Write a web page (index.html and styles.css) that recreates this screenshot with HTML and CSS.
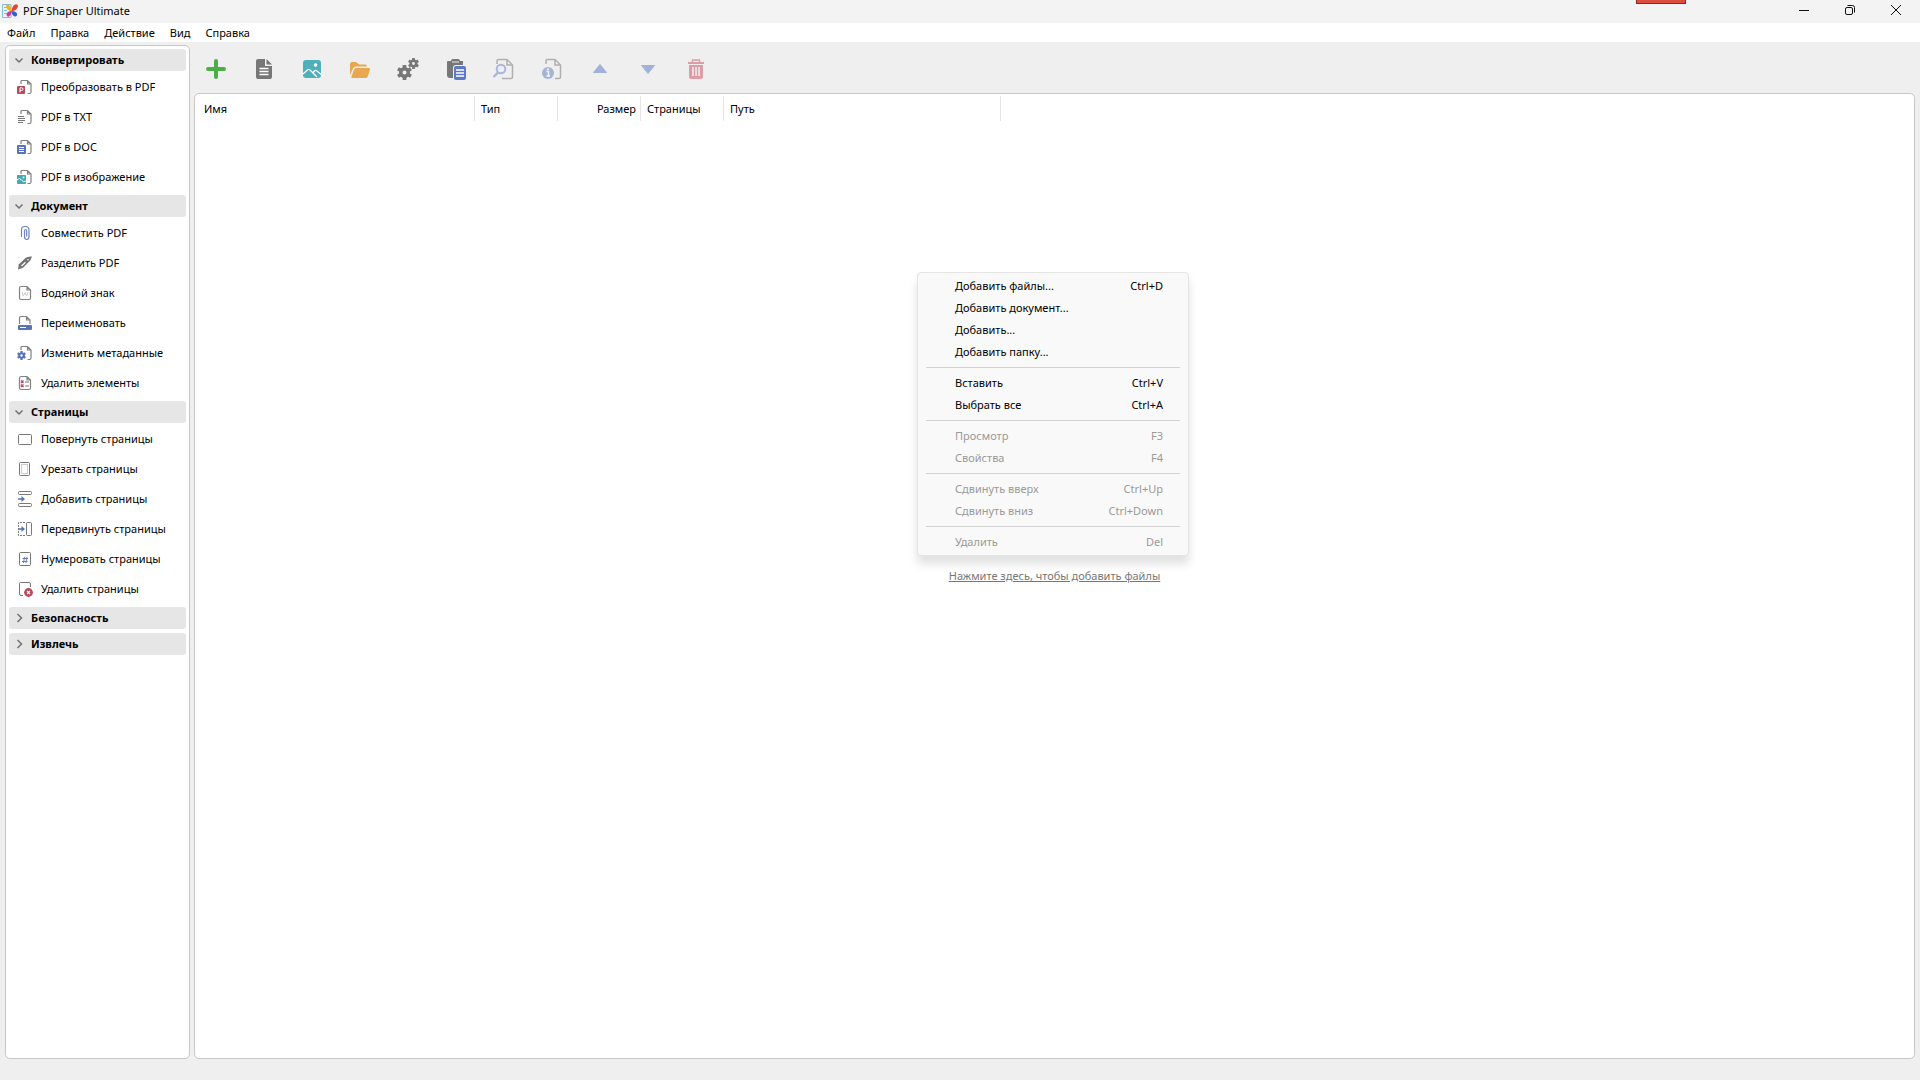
FILE: index.html
```html
<!DOCTYPE html>
<html lang="ru">
<head>
    <title>PDF Shaper Ultimate</title>
    <meta charset="UTF-8">
    <meta name="viewport" content="width=device-width, initial-scale=1.0">
    <link rel="stylesheet" href="styles.css">
</head>
<body>
    <!-- shared icon shapes -->
    <svg class="defs" aria-hidden="true">
        <symbol id="page-part" viewBox="0 0 16 16">
            <path d="M4 5V2.5Q4 1.5 5 1.5H10.5L14 5V13Q14 14.5 12.5 14.5H10.5M10.5 1.5V5H14" fill="none" stroke="#808080" stroke-width="1.2"/>
        </symbol>
        <symbol id="page" viewBox="0 0 16 16">
            <path d="M3.5 1.5H10L13.5 5V13Q13.5 14.5 12 14.5H4Q2.5 14.5 2.5 13V3Q2.5 1.5 4 1.5M10 1.5V5H13.5" fill="none" stroke="#808080" stroke-width="1.2"/>
        </symbol>
        <symbol id="chevron-down" viewBox="0 0 10 10"><path d="M1.5 3.5L5 7L8.5 3.5" fill="none" stroke="#707070" stroke-width="1.5"/></symbol>
        <symbol id="chevron-right" viewBox="0 0 10 10"><path d="M3.5 1L7.5 5L3.5 9" fill="none" stroke="#707070" stroke-width="1.5"/></symbol>
        <symbol id="gear" viewBox="0 0 12 12">
            <circle cx="6" cy="6" r="3" fill="none" stroke="currentColor" stroke-width="2.8"/>
            <path d="M6 0V3M6 9V12M.8 3L3.4 4.5M8.6 7.5L11.2 9M.8 9L3.4 7.5M8.6 4.5L11.2 3" stroke="currentColor" stroke-width="3"/>
        </symbol>
    </svg>

    <header class="title-bar">
        <svg class="app-icon" width="16" height="16" viewBox="0 0 16 16">
            <path d="M.5 1.5H9V14.5H.5Z" fill="#eaf5fb" stroke="#7fbfe0"/>
            <path d="M2 4.5H5M2 7.5H5M2 10.5H5" stroke="#7fbfe0"/>
            <path d="M9.500 8.500Q3.500 6.500 4 2.500Q6 .5 8 3Q9.500 5 9.500 8.500" fill="#f2b21c"/>
            <path d="M9.500 8.500Q10 3 13 1.500Q16.500 .8 15.800 4Q14.500 7.500 9.500 8.500" fill="#e8403a"/>
            <path d="M9.500 8Q5.500 8 4.500 11Q4.500 14.500 7 13.500Q9.500 12 9.500 8" fill="#c23fa4"/>
            <path d="M9.500 8Q14 8 15 10.500Q15.500 14 12.500 13.500Q9.500 12 9.500 8" fill="#2f62d0"/>
        </svg>
        <h1>PDF Shaper Ultimate</h1>
        <div class="record-tab"></div>
        <div class="window-buttons">
            <button aria-label="Свернуть"><svg width="12" height="12" viewBox="0 0 12 12"><path d="M1 6.5H11"/></svg></button>
            <button aria-label="Восстановить"><svg width="12" height="12" viewBox="0 0 12 12"><rect x="1.5" y="3.5" width="7" height="7" rx="1.5"/><path d="M3.5 1.5H8.5Q10.5 1.5 10.5 3.5V8.5"/></svg></button>
            <button aria-label="Закрыть"><svg width="12" height="12" viewBox="0 0 12 12"><path d="M1 1L11 11M11 1L1 11"/></svg></button>
        </div>
    </header>

    <nav class="menu-bar">
        <button>Файл</button>
        <button>Правка</button>
        <button>Действие</button>
        <button>Вид</button>
        <button>Справка</button>
    </nav>

    <div class="workspace">
        <aside class="sidebar">
            <button class="group-header"><svg width="10" height="10"><use href="#chevron-down"/></svg>Конвертировать</button>
            <div class="group-items">
                <button><svg width="16" height="16" viewBox="0 0 16 16"><use href="#page-part"/><rect y="7" width="8" height="8" rx="1" fill="#b9485c"/><path d="M3 13.5V8.8H4.5Q6 8.8 6 10.2Q6 11.5 4.5 11.5H3" fill="none" stroke="#fff"/></svg>Преобразовать в PDF</button>
                <button><svg width="16" height="16" viewBox="0 0 16 16"><use href="#page-part"/><path d="M1 7.5H7M1 9.5H8M1 11.5H8M1 13.5H6" stroke="#777"/></svg>PDF в TXT</button>
                <button><svg width="16" height="16" viewBox="0 0 16 16"><use href="#page-part"/><rect y="6" width="9" height="9" rx="1" fill="#5873b9"/><path d="M2 8.5H7M2 10.5H7M2 12.5H7" stroke="#fff"/></svg>PDF в DOC</button>
                <button><svg width="16" height="16" viewBox="0 0 16 16"><use href="#page-part"/><rect y="6" width="9" height="9" rx="1" fill="#45a9b3"/><path d="M0 11Q2.5 8 4.5 11T9 12" fill="none" stroke="#fff"/><circle cx="6.5" cy="8.5" r="1" fill="#fff"/></svg>PDF в изображение</button>
            </div>

            <button class="group-header"><svg width="10" height="10"><use href="#chevron-down"/></svg>Документ</button>
            <div class="group-items">
                <button><svg width="16" height="16" viewBox="0 0 16 16"><path d="M4.5 12V4.5Q4.5 1.5 8 1.5Q12 1.5 12 5V11.5Q12 14.5 9.7 14.5Q7.5 14.5 7.5 11.5V6Q7.5 4.5 8.6 4.5Q9.7 4.5 9.7 6V11.5" fill="none" stroke="#6b84c4" stroke-width="1.2"/></svg>Совместить PDF</button>
                <button><svg width="16" height="16" viewBox="0 0 16 16"><path d="M1 14.5L1.7 9.5L8.5 3Q10.5 1.2 15 1.5L13.300 5.5L6 12.7Z" fill="#747474"/><path d="M4.500 11L8.500 7.2" stroke="#fff" stroke-width="1.2"/><circle cx="11" cy="4.7" r=".8" fill="#fff"/></svg>Разделить PDF</button>
                <button><svg width="16" height="16" viewBox="0 0 16 16"><use href="#page"/><path d="M5 7L6.3 11L8 7.5L9.7 11L11 7" fill="none" stroke="#ccc"/></svg>Водяной знак</button>
                <button><svg width="16" height="16" viewBox="0 0 16 16"><path d="M2.5 9V3Q2.5 1.5 4 1.5H9.5L13 5V9M9.5 1.5V5H13" fill="none" stroke="#808080" stroke-width="1.2"/><rect x="1" y="10" width="14" height="5" rx="1" fill="#5873b9"/><rect x="3" y="12" width="6" height="1" fill="#fff"/></svg>Переименовать</button>
                <button class="blue-gear"><svg width="16" height="16" viewBox="0 0 16 16"><use href="#page-part"/><use href="#gear" x="0" y="6" width="9" height="9"/></svg>Изменить метаданные</button>
                <button><svg width="16" height="16" viewBox="0 0 16 16"><use href="#page"/><path d="M4 5.500L6.500 8M6.500 5.500L4 8M4 9.500L6.500 12M6.500 9.500L4 12" stroke="#b9485c" stroke-width="1.300"/><path d="M8 7H12M8 11H12" stroke="#777"/></svg>Удалить элементы</button>
            </div>

            <button class="group-header"><svg width="10" height="10"><use href="#chevron-down"/></svg>Страницы</button>
            <div class="group-items">
                <button><svg width="16" height="16" viewBox="0 0 16 16"><rect x="1.5" y="3.5" width="13" height="10" rx="1" fill="none" stroke="#777"/></svg>Повернуть страницы</button>
                <button><svg width="16" height="16" viewBox="0 0 16 16"><rect x="2.5" y="1.5" width="10" height="13" rx="1" fill="none" stroke="#777"/><rect x="4.5" y="3.5" width="6" height="9" fill="none" stroke="#ccc"/></svg>Урезать страницы</button>
                <button><svg width="16" height="16" viewBox="0 0 16 16"><rect x="1.5" y=".5" width="13" height="3" rx="1" fill="none" stroke="#777"/><rect x="1.5" y="12.5" width="13" height="3" rx="1" fill="none" stroke="#777"/><path d="M1 8H6" stroke="#4f76bd" stroke-width="1.5"/><path d="M4.5 5L8 8L4.5 11Z" fill="#4f76bd"/></svg>Добавить страницы</button>
                <button><svg width="16" height="16" viewBox="0 0 16 16"><rect x="9.5" y="1.5" width="5" height="13" rx="1" fill="none" stroke="#777"/><path d="M8 1.5H1.5V14.5H8" fill="none" stroke="#777" stroke-dasharray="2 1"/><path d="M2 8H6" stroke="#4f76bd" stroke-width="1.5"/><path d="M4.5 5L8 8L4.5 11Z" fill="#4f76bd"/></svg>Передвинуть страницы</button>
                <button><svg width="16" height="16" viewBox="0 0 16 16"><rect x="2.5" y="1.5" width="11" height="13" rx="1" fill="none" stroke="#777"/><path d="M7.5 6L6.5 12M10 6L9 12M5.5 7.5H11M5 10.5H10.5" stroke="#5873b9" stroke-width=".9"/></svg>Нумеровать страницы</button>
                <button><svg width="16" height="16" viewBox="0 0 16 16"><path d="M6 14.5H4Q2.5 14.5 2.5 13V2.5Q2.5 1.5 3.5 1.5H12Q13.5 1.5 13.5 3V6" fill="none" stroke="#777"/><circle cx="11.5" cy="11.5" r="4.4" fill="#b9485c"/><path d="M10 10L13 13M13 10L10 13" stroke="#fff" stroke-width="1.2"/></svg>Удалить страницы</button>
            </div>

            <button class="group-header collapsed"><svg width="10" height="10"><use href="#chevron-right"/></svg>Безопасность</button>
            <button class="group-header collapsed"><svg width="10" height="10"><use href="#chevron-right"/></svg>Извлечь</button>
        </aside>

        <main class="content">
            <div class="toolbar">
                <button aria-label="Добавить файлы"><svg width="24" height="24" viewBox="0 0 24 24"><path d="M12 4V20M4 12H20" stroke="#4cae46" stroke-width="4" stroke-linecap="round"/></svg></button>
                <button aria-label="Добавить документ"><svg width="24" height="24" viewBox="0 0 24 24"><path d="M6 2H13V9H20V20Q20 22 18 22H6Q4 22 4 20V4Q4 2 6 2M14.5 2L20 7.5H14.5Z" fill="#777"/><path d="M7.5 11.5H16.5M7.5 14.5H16.5M7.5 17.5H16.5" stroke="#fff" stroke-width="1.5"/></svg></button>
                <button aria-label="Добавить изображение"><svg width="24" height="24" viewBox="0 0 24 24"><rect x="3" y="3" width="18" height="18" rx="3" fill="#4db0bb"/><path d="M3 17L8 12.5Q9 12 10 13L17 20M13 15.5L15 13.5Q16 13 17 14L21 17.5" fill="none" stroke="#fff" stroke-width="1.3"/><circle cx="15.5" cy="8" r="1.8" fill="#fff"/></svg></button>
                <button aria-label="Добавить папку"><svg width="24" height="24" viewBox="0 0 24 24"><path d="M2 18V7Q2 5 4 5H8L11 7.5H17Q19 7.5 19 9.5H8Q6 9.5 5 11.5Z" fill="#e9a750"/><path d="M8 11H21Q22.5 11 22 12.5L19.5 20Q19 21 18 21H4Q3 21 3.5 19.5L6 12.5Q6.5 11 8 11" fill="#e9a750"/></svg></button>
                <button aria-label="Настройки" class="gears"><svg width="24" height="24" viewBox="0 0 24 24"><use href="#gear" x="1" y="8" width="15" height="15"/><use href="#gear" x="12" y="1" width="11" height="11"/></svg></button>
                <button aria-label="Вставить"><svg width="24" height="24" viewBox="0 0 24 24"><path d="M4 4H7Q7 2 9 2H14Q16 2 16 4H19V8H12Q9 8 9 11V21H6Q3 21 3 18V5Q3 4 4 4" fill="#777"/><path d="M8 5H15" stroke="#eee"/><rect x="10" y="9" width="12" height="14" rx="2" fill="#5f79c4"/><path d="M12 13H20M12 16H20M12 19H20" stroke="#fff" stroke-width="1.3"/></svg></button>
                <button aria-label="Просмотр" disabled><svg width="24" height="24" viewBox="0 0 24 24"><path d="M5 7V4Q5 2.5 6.5 2.5H15L20.5 8V20Q20.5 21.5 19 21.5H10M15 2.5V8H20.5" fill="none" stroke="#666" stroke-width="1.5"/><circle cx="9" cy="12" r="4.3" fill="none" stroke="#5873c1" stroke-width="2"/><path d="M6 15.5L1.5 20" stroke="#5873c1" stroke-width="2.4"/></svg></button>
                <button aria-label="Свойства" disabled><svg width="24" height="24" viewBox="0 0 24 24"><path d="M6 7V4Q6 2.5 7.5 2.5H15L20.5 8V20Q20.5 21.5 19 21.5H15M15 2.5V8H20.5" fill="none" stroke="#666" stroke-width="1.5"/><circle cx="8" cy="16" r="6" fill="#4f70b8"/><path d="M6.5 14.5H8.5V19M6.5 19H10" fill="none" stroke="#fff" stroke-width="1.5"/><circle cx="8" cy="12.3" r="1" fill="#fff"/></svg></button>
                <button aria-label="Сдвинуть вверх" disabled><svg width="24" height="24" viewBox="0 0 24 24"><path d="M12 7.5L18.5 15.5H5.5Z" fill="#4668bd" stroke="#4668bd" stroke-linejoin="round"/></svg></button>
                <button aria-label="Сдвинуть вниз" disabled><svg width="24" height="24" viewBox="0 0 24 24"><path d="M12 16.5L18.5 8.5H5.5Z" fill="#4668bd" stroke="#4668bd" stroke-linejoin="round"/></svg></button>
                <button aria-label="Удалить" disabled><svg width="24" height="24" viewBox="0 0 24 24"><path d="M4 5H20V7H4ZM5 8H19V20Q19 22 17 22H7Q5 22 5 20Z" fill="#c83950"/><path d="M8.5 5V3H15.5V5" fill="none" stroke="#c83950" stroke-width="1.5"/><path d="M9 10V19M12 10V19M15 10V19" stroke="#fff" stroke-width="1.4"/></svg></button>
            </div>

            <section class="file-list">
                <table>
                    <thead>
                        <tr>
                            <th class="col-name">Имя</th>
                            <th class="col-short">Тип</th>
                            <th class="col-short col-size">Размер</th>
                            <th class="col-short">Страницы</th>
                            <th class="col-path">Путь</th>
                        </tr>
                    </thead>
                </table>
                <a class="add-link" href="#">Нажмите здесь, чтобы добавить файлы</a>

                <div class="context-menu" role="menu">
                    <button role="menuitem">Добавить файлы...<kbd>Ctrl+D</kbd></button>
                    <button role="menuitem">Добавить документ...</button>
                    <button role="menuitem">Добавить...</button>
                    <button role="menuitem">Добавить папку...</button>
                    <hr>
                    <button role="menuitem">Вставить<kbd>Ctrl+V</kbd></button>
                    <button role="menuitem">Выбрать все<kbd>Ctrl+A</kbd></button>
                    <hr>
                    <button role="menuitem" disabled>Просмотр<kbd>F3</kbd></button>
                    <button role="menuitem" disabled>Свойства<kbd>F4</kbd></button>
                    <hr>
                    <button role="menuitem" disabled>Сдвинуть вверх<kbd>Ctrl+Up</kbd></button>
                    <button role="menuitem" disabled>Сдвинуть вниз<kbd>Ctrl+Down</kbd></button>
                    <hr>
                    <button role="menuitem" disabled>Удалить<kbd>Del</kbd></button>
                </div>
            </section>
        </main>
    </div>
</body>
</html>
```
FILE: styles.css
```css
* {
    box-sizing: border-box;
}

body {
    font-family: "Noto Sans", "Open Sans", sans-serif;
    font-size: 11px;
    line-height: 18px;
    margin: 0;
    height: 100vh;
    display: flex;
    flex-direction: column;
    background-color: #efefef;
    color: #000;
}

button {
    font: inherit;
    color: inherit;
    background: none;
    border: none;
    margin: 0;
    padding: 0;
}

.defs {
    display: none;
}

/* Title bar */
.title-bar {
    position: relative;
    display: flex;
    align-items: center;
    height: 23px;
    padding: 0 1px 1px 2px;
    background-color: #f3f3f3;
}

.title-bar h1 {
    margin: 0 0 0 5px;
    font-size: 11px;
    font-weight: 400;
}

.record-tab {
    position: absolute;
    top: 0;
    right: 234px;
    width: 50px;
    height: 4px;
    background-color: #dc4c40;
    border: 1px solid #8c2a22;
    border-top: none;
}

.window-buttons {
    display: flex;
    align-self: flex-start;
    margin-left: auto;
}

.window-buttons button {
    width: 46px;
    height: 20px;
    display: flex;
    align-items: center;
    justify-content: center;
}

.window-buttons svg {
    fill: none;
    stroke: #111;
}

/* Menu */
.menu-bar {
    display: flex;
    gap: 1px;
    height: 19px;
    background-color: #fff;
}

.menu-bar button {
    padding: 0 7px;
}

.workspace {
    flex: 1;
    display: flex;
    gap: 4px;
    min-height: 0;
    padding: 0 5px 21px;
}

/* Sidebar */
.sidebar {
    width: 185px;
    flex-shrink: 0;
    margin-top: 3px;
    padding: 3px;
    background-color: #fff;
    border: 1px solid #c8c8c8;
    border-radius: 5px;
}

.group-header {
    display: flex;
    align-items: center;
    width: 100%;
    height: 22px;
    padding-left: 5px;
    background-color: #e6e6e6;
    border-radius: 3px;
    font-weight: 700;
}

.group-header svg {
    margin-right: 7px;
}

.group-header.collapsed {
    margin-bottom: 4px;
}

.group-items {
    margin: 1px 0 3px;
}

.group-items button {
    display: flex;
    align-items: center;
    width: 100%;
    height: 30px;
    padding-left: 8px;
}

.group-items svg {
    margin-right: 8px;
}

.blue-gear svg {
    color: #5873b9;
}

/* Toolbar */
.content {
    flex: 1;
    display: flex;
    flex-direction: column;
}

.toolbar {
    display: flex;
    gap: 4px;
    height: 51px;
    padding-top: 3px;
}

.toolbar button {
    width: 44px;
    display: flex;
    align-items: center;
    justify-content: center;
}

.toolbar button:disabled svg {
    opacity: 0.45;
}

.gears svg {
    color: #777;
}

/* File list */
.file-list {
    position: relative;
    flex: 1;
    display: grid;
    background-color: #fff;
    border: 1px solid #c8c8c8;
    border-radius: 5px;
}

.file-list table,
.add-link {
    grid-area: 1 / 1;
}

.file-list table {
    align-self: start;
    justify-self: start;
    table-layout: fixed;
    width: 806px;
    margin-top: 2px;
    border-collapse: separate;
    border-spacing: 0;
}

.file-list th {
    height: 25px;
    padding: 0 4px 0 6px;
    border-right: 1px solid #e5e5e5;
    font-weight: 400;
    text-align: left;
}

.file-list th:first-child {
    padding-left: 9px;
}

.file-list .col-size {
    text-align: right;
}

.col-name {
    width: 280px;
}

.col-short {
    width: 83px;
}

.col-path {
    width: 277px;
}

.add-link {
    place-self: center;
    color: #777;
}

/* Context menu */
.context-menu {
    position: absolute;
    top: 178px;
    left: 722px;
    width: 272px;
    padding: 2px 0;
    background-color: #f9f9f9;
    border: 1px solid #e4e4e4;
    border-radius: 4px;
    box-shadow: 0 8px 10px rgba(0, 0, 0, 0.12);
}

.context-menu button {
    display: flex;
    align-items: center;
    justify-content: space-between;
    width: 100%;
    height: 22px;
    padding: 0 25px 0 37px;
}

.context-menu button:disabled {
    color: #999;
}

.context-menu kbd {
    font: inherit;
}

.context-menu hr {
    height: 1px;
    margin: 4px 8px;
    border: none;
    background-color: #d2d2d2;
}
```
